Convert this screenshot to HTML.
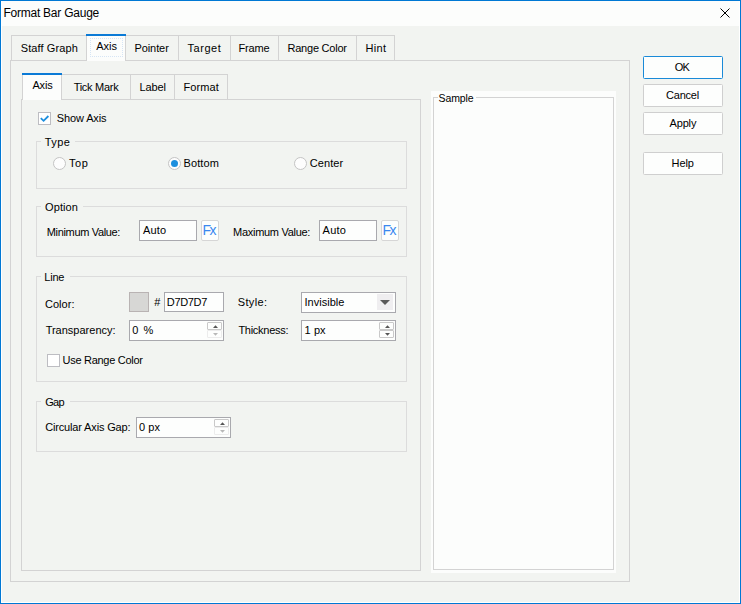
<!DOCTYPE html><html><head><meta charset="utf-8"><title>Format Bar Gauge</title><style>*{margin:0;padding:0}
html,body{width:741px;height:604px;overflow:hidden;background:#f2f4f1}
body{position:relative;font-family:"Liberation Sans",sans-serif}
div,svg{position:absolute}
.t{white-space:nowrap}
</style></head><body>
<div style="left:0px;top:0px;width:741px;height:604px;background:#0078d4"></div>
<div style="left:1px;top:1px;width:739px;height:602px;background:#ffffff"></div>
<div style="left:2px;top:1px;width:737px;height:25px;background:#fcfdfc"></div>
<div style="left:2px;top:26px;width:737px;height:576px;background:#f2f4f1"></div>
<svg style="position:absolute;left:715px;top:3px" width="20" height="20" viewBox="0 0 20 20"><path d="M5.5 5.5L14.5 14.5M14.5 5.5L5.5 14.5" stroke="#000" stroke-width="1.0" fill="none"/></svg>
<div style="left:10px;top:60px;width:620px;height:522px;border:1px solid #d3d3d3;box-sizing:border-box"></div>
<div style="left:11px;top:35px;width:76px;height:25px;border:1px solid #d3d3d3;border-bottom:none;box-sizing:border-box;background:#f2f4f1"></div>
<div style="left:125px;top:35px;width:54px;height:25px;border:1px solid #d3d3d3;border-bottom:none;box-sizing:border-box;background:#f2f4f1"></div>
<div style="left:178px;top:35px;width:53px;height:25px;border:1px solid #d3d3d3;border-bottom:none;box-sizing:border-box;background:#f2f4f1"></div>
<div style="left:230px;top:35px;width:49px;height:25px;border:1px solid #d3d3d3;border-bottom:none;box-sizing:border-box;background:#f2f4f1"></div>
<div style="left:278px;top:35px;width:79px;height:25px;border:1px solid #d3d3d3;border-bottom:none;box-sizing:border-box;background:#f2f4f1"></div>
<div style="left:356px;top:35px;width:39px;height:25px;border:1px solid #d3d3d3;border-bottom:none;box-sizing:border-box;background:#f2f4f1"></div>
<div style="left:86px;top:34px;width:40px;height:27px;background:#fcfdfc;border-left:1px solid #d3d3d3;border-right:1px solid #d3d3d3;box-sizing:border-box"></div>
<div style="left:86px;top:34px;width:40px;height:2px;background:#0a7ad6"></div>
<div style="left:90px;top:38px;width:33px;height:19px;border:1px dotted #d6e5f5;box-sizing:border-box"></div>
<div style="left:21px;top:99px;width:400px;height:472px;border:1px solid #d3d3d3;box-sizing:border-box"></div>
<div style="left:61px;top:74px;width:70px;height:25px;border:1px solid #d3d3d3;border-bottom:none;box-sizing:border-box;background:#f2f4f1"></div>
<div style="left:130px;top:74px;width:45px;height:25px;border:1px solid #d3d3d3;border-bottom:none;box-sizing:border-box;background:#f2f4f1"></div>
<div style="left:174px;top:74px;width:54px;height:25px;border:1px solid #d3d3d3;border-bottom:none;box-sizing:border-box;background:#f2f4f1"></div>
<div style="left:22px;top:73px;width:40px;height:27px;background:#fcfdfc;border-left:1px solid #d3d3d3;border-right:1px solid #d3d3d3;box-sizing:border-box"></div>
<div style="left:22px;top:73px;width:40px;height:2px;background:#0a7ad6"></div>
<div style="left:431px;top:91px;width:185px;height:482px;background:#fcfdfc"></div>
<div style="left:433px;top:97px;width:181px;height:473px;border:1px solid #d3d3d3;box-sizing:border-box"></div>
<div style="left:438px;top:93px;width:38px;height:8px;background:#fcfdfc"></div>
<div style="left:36px;top:141px;width:371px;height:48px;border:1px solid #dcdcdc;box-sizing:border-box"></div>
<div style="left:41px;top:140px;width:34px;height:3px;background:#f2f4f1"></div>
<div style="left:36px;top:206px;width:371px;height:51px;border:1px solid #dcdcdc;box-sizing:border-box"></div>
<div style="left:41px;top:205px;width:42px;height:3px;background:#f2f4f1"></div>
<div style="left:36px;top:276px;width:371px;height:106px;border:1px solid #dcdcdc;box-sizing:border-box"></div>
<div style="left:41px;top:275px;width:29px;height:3px;background:#f2f4f1"></div>
<div style="left:36px;top:401px;width:371px;height:51px;border:1px solid #dcdcdc;box-sizing:border-box"></div>
<div style="left:41px;top:400px;width:29px;height:3px;background:#f2f4f1"></div>
<div style="left:38px;top:112px;width:13px;height:13px;background:#fff;border:1px solid #bdbdc2;box-sizing:border-box"></div>
<svg style="position:absolute;left:38px;top:112px" width="13" height="13" viewBox="0 0 13 13"><path d="M2.8 6.1L5.6 8.8L10.4 4.0" stroke="#1c8fde" stroke-width="1.8" fill="none"/></svg>
<div style="left:53px;top:157px;width:13px;height:13px;background:#fdfdfd;border:1px solid #c4c4c4;border-radius:50%;box-sizing:border-box"></div>
<div style="left:168px;top:157px;width:13px;height:13px;background:#fdfdfd;border:1px solid #c4c4c4;border-radius:50%;box-sizing:border-box"></div>
<div style="left:294px;top:157px;width:13px;height:13px;background:#fdfdfd;border:1px solid #c4c4c4;border-radius:50%;box-sizing:border-box"></div>
<div style="left:171px;top:160px;width:7px;height:7px;background:#1c8fde;border-radius:50%"></div>
<div style="left:139px;top:220px;width:58px;height:21px;background:#fdfefd;border:1px solid #a9a9ae;box-sizing:border-box"></div>
<div style="left:319px;top:220px;width:58px;height:21px;background:#fdfefd;border:1px solid #a9a9ae;box-sizing:border-box"></div>
<div style="left:201px;top:220px;width:18px;height:21px;background:#fdfefd;border:1px solid #d6d6d6;border-radius:2px;box-sizing:border-box"></div>
<div style="left:381px;top:220px;width:18px;height:21px;background:#fdfefd;border:1px solid #d6d6d6;border-radius:2px;box-sizing:border-box"></div>
<div style="left:129px;top:292px;width:20px;height:20px;background:#d7d7d5;border:1px solid #b9b3b3;box-sizing:border-box"></div>
<div style="left:164px;top:292px;width:60px;height:20px;background:#fdfefd;border:1px solid #a9a9ae;box-sizing:border-box"></div>
<div style="left:301px;top:292px;width:95px;height:21px;background:#fdfefd;border:1px solid #a9a9ae;box-sizing:border-box"></div>
<div style="left:377px;top:294px;width:16px;height:16px;background:#efeef0"></div>
<svg style="position:absolute;left:377px;top:294px" width="17" height="16"><path d="M3 6H13L8 11Z" fill="#5a5a5a"/></svg>
<div style="left:129px;top:320px;width:95px;height:21px;background:#fdfefd;border:1px solid #a9a9ae;box-sizing:border-box"></div>
<div style="left:207px;top:322px;width:15px;height:8px;border:1px solid #c9c9c9;border-radius:1px;box-sizing:border-box;background:#fdfefd"></div>
<div style="left:207px;top:330px;width:15px;height:8px;border:1px solid #ececec;border-radius:1px;box-sizing:border-box;background:#fdfefd"></div>
<svg style="position:absolute;left:207px;top:322px" width="15" height="16"><path d="M6 6H11L8.5 3.3Z" fill="#555"/><path d="M6 11H11L8.5 13.7Z" fill="#b8b8b8"/></svg>
<div style="left:301px;top:320px;width:95px;height:21px;background:#fdfefd;border:1px solid #a9a9ae;box-sizing:border-box"></div>
<div style="left:379px;top:322px;width:15px;height:8px;border:1px solid #c9c9c9;border-radius:1px;box-sizing:border-box;background:#fdfefd"></div>
<div style="left:379px;top:330px;width:15px;height:8px;border:1px solid #c9c9c9;border-radius:1px;box-sizing:border-box;background:#fdfefd"></div>
<svg style="position:absolute;left:379px;top:322px" width="15" height="16"><path d="M6 6H11L8.5 3.3Z" fill="#555"/><path d="M6 11H11L8.5 13.7Z" fill="#555"/></svg>
<div style="left:136px;top:417px;width:95px;height:21px;background:#fdfefd;border:1px solid #a9a9ae;box-sizing:border-box"></div>
<div style="left:214px;top:419px;width:15px;height:8px;border:1px solid #c9c9c9;border-radius:1px;box-sizing:border-box;background:#fdfefd"></div>
<div style="left:214px;top:427px;width:15px;height:8px;border:1px solid #ececec;border-radius:1px;box-sizing:border-box;background:#fdfefd"></div>
<svg style="position:absolute;left:214px;top:419px" width="15" height="16"><path d="M6 6H11L8.5 3.3Z" fill="#555"/><path d="M6 11H11L8.5 13.7Z" fill="#b8b8b8"/></svg>
<div style="left:47px;top:354px;width:13px;height:13px;background:#fff;border:1px solid #bdbdc2;box-sizing:border-box"></div>
<div style="left:643px;top:56px;width:80px;height:23px;background:#fdfefd;border:1px solid #1a8ad8;border-radius:1.5px;box-sizing:border-box"></div>
<div style="left:643px;top:84px;width:80px;height:23px;background:#fdfefd;border:1px solid #cfcfcf;border-radius:1.5px;box-sizing:border-box"></div>
<div style="left:643px;top:112px;width:80px;height:23px;background:#fdfefd;border:1px solid #cfcfcf;border-radius:1.5px;box-sizing:border-box"></div>
<div style="left:643px;top:152px;width:80px;height:23px;background:#fdfefd;border:1px solid #cfcfcf;border-radius:1.5px;box-sizing:border-box"></div>
<div id="title" class="t" style="left:3.39px;top:7.26px;font-size:12px;line-height:12px;letter-spacing:-0.232px;color:#000">Format Bar Gauge</div>
<div id="t_staff" class="t" style="left:20.70px;top:43.13px;font-size:11px;line-height:11px;letter-spacing:0.108px;color:#000">Staff Graph</div>
<div id="t_axis" class="t" style="left:96.17px;top:41.23px;font-size:11px;line-height:11px;letter-spacing:0.014px;color:#000">Axis</div>
<div id="t_pointer" class="t" style="left:134.46px;top:43.13px;font-size:11px;line-height:11px;letter-spacing:-0.083px;color:#000">Pointer</div>
<div id="t_target" class="t" style="left:187.42px;top:43.13px;font-size:11px;line-height:11px;letter-spacing:0.579px;color:#000">Target</div>
<div id="t_frame" class="t" style="left:238.53px;top:43.23px;font-size:11px;line-height:11px;letter-spacing:-0.167px;color:#000">Frame</div>
<div id="t_range" class="t" style="left:287.53px;top:43.13px;font-size:11px;line-height:11px;letter-spacing:-0.229px;color:#000">Range Color</div>
<div id="t_hint" class="t" style="left:365.53px;top:43.13px;font-size:11px;line-height:11px;letter-spacing:0.304px;color:#000">Hint</div>
<div id="i_axis" class="t" style="left:32.45px;top:79.93px;font-size:11px;line-height:11px;letter-spacing:-0.182px;color:#000">Axis</div>
<div id="i_tick" class="t" style="left:73.68px;top:82.13px;font-size:11px;line-height:11px;letter-spacing:-0.282px;color:#000">Tick Mark</div>
<div id="i_label" class="t" style="left:139.49px;top:82.13px;font-size:11px;line-height:11px;letter-spacing:-0.115px;color:#000">Label</div>
<div id="i_format" class="t" style="left:183.46px;top:82.13px;font-size:11px;line-height:11px;letter-spacing:0.113px;color:#000">Format</div>
<div id="showaxis" class="t" style="left:56.70px;top:113.13px;font-size:11px;line-height:11px;letter-spacing:-0.105px;color:#000">Show Axis</div>
<div id="type" class="t" style="left:44.63px;top:137.33px;font-size:11px;line-height:11px;letter-spacing:0.490px;color:#000">Type</div>
<div id="top" class="t" style="left:68.96px;top:158.13px;font-size:11px;line-height:11px;letter-spacing:0.540px;color:#000">Top</div>
<div id="bottom" class="t" style="left:183.46px;top:158.13px;font-size:11px;line-height:11px;letter-spacing:0.117px;color:#000">Bottom</div>
<div id="center" class="t" style="left:309.81px;top:158.13px;font-size:11px;line-height:11px;letter-spacing:0.081px;color:#000">Center</div>
<div id="option" class="t" style="left:45.09px;top:202.03px;font-size:11px;line-height:11px;letter-spacing:0.093px;color:#000">Option</div>
<div id="minval" class="t" style="left:46.79px;top:227.23px;font-size:11px;line-height:11px;letter-spacing:-0.339px;color:#000">Minimum Value:</div>
<div id="auto1" class="t" style="left:142.95px;top:225.13px;font-size:11px;line-height:11px;letter-spacing:0.143px;color:#000">Auto</div>
<div id="maxval" class="t" style="left:233.11px;top:227.23px;font-size:11px;line-height:11px;letter-spacing:-0.295px;color:#000">Maximum Value:</div>
<div id="auto2" class="t" style="left:322.61px;top:225.13px;font-size:11px;line-height:11px;letter-spacing:0.180px;color:#000">Auto</div>
<div id="line" class="t" style="left:44.25px;top:272.33px;font-size:11px;line-height:11px;letter-spacing:-0.195px;color:#000">Line</div>
<div id="color" class="t" style="left:44.99px;top:299.33px;font-size:11px;line-height:11px;letter-spacing:0.033px;color:#000">Color:</div>
<div id="hash" class="t" style="left:154.17px;top:297.33px;font-size:11px;line-height:11px;letter-spacing:0.000px;color:#000">#</div>
<div id="hex" class="t" style="left:166.82px;top:297.23px;font-size:11px;line-height:11px;letter-spacing:-0.332px;color:#000">D7D7D7</div>
<div id="style" class="t" style="left:237.80px;top:297.23px;font-size:11px;line-height:11px;letter-spacing:0.325px;color:#000">Style:</div>
<div id="invisible" class="t" style="left:304.40px;top:297.13px;font-size:11px;line-height:11px;letter-spacing:0.037px;color:#000">Invisible</div>
<div id="transp" class="t" style="left:45.63px;top:325.23px;font-size:11px;line-height:11px;letter-spacing:0.004px;color:#000">Transparency:</div>
<div id="pct" class="t" style="left:132.29px;top:325.23px;font-size:11px;line-height:11px;letter-spacing:0.962px;color:#000">0 %</div>
<div id="thick" class="t" style="left:238.42px;top:325.03px;font-size:11px;line-height:11px;letter-spacing:-0.276px;color:#000">Thickness:</div>
<div id="onepx" class="t" style="left:304.61px;top:325.23px;font-size:11px;line-height:11px;letter-spacing:0.069px;color:#000">1 px</div>
<div id="userange" class="t" style="left:62.53px;top:355.13px;font-size:11px;line-height:11px;letter-spacing:-0.286px;color:#000">Use Range Color</div>
<div id="gap" class="t" style="left:45.23px;top:397.13px;font-size:11px;line-height:11px;letter-spacing:-0.753px;color:#000">Gap</div>
<div id="circ" class="t" style="left:45.14px;top:422.13px;font-size:11px;line-height:11px;letter-spacing:-0.151px;color:#000">Circular Axis Gap:</div>
<div id="zeropx" class="t" style="left:139.01px;top:422.33px;font-size:11px;line-height:11px;letter-spacing:0.073px;color:#000">0 px</div>
<div id="sample" class="t" style="left:438.58px;top:93.42px;font-size:10.5px;line-height:10.5px;letter-spacing:-0.134px;color:#000">Sample</div>
<div id="ok" class="t" style="left:674.84px;top:62.13px;font-size:11px;line-height:11px;letter-spacing:-0.868px;color:#000">OK</div>
<div id="cancel" class="t" style="left:666.12px;top:90.13px;font-size:11px;line-height:11px;letter-spacing:-0.232px;color:#000">Cancel</div>
<div id="apply" class="t" style="left:669.45px;top:118.23px;font-size:11px;line-height:11px;letter-spacing:-0.129px;color:#000">Apply</div>
<div id="help" class="t" style="left:671.53px;top:158.23px;font-size:11px;line-height:11px;letter-spacing:-0.053px;color:#000">Help</div>
<div id="fx1" class="t" style="left:202.42px;top:222.91px;font-size:14px;line-height:14px;letter-spacing:-1.492px;color:#3a88f0">Fx</div>
<div id="fx2" class="t" style="left:382.42px;top:222.91px;font-size:14px;line-height:14px;letter-spacing:-1.492px;color:#3a88f0">Fx</div>
</body></html>
